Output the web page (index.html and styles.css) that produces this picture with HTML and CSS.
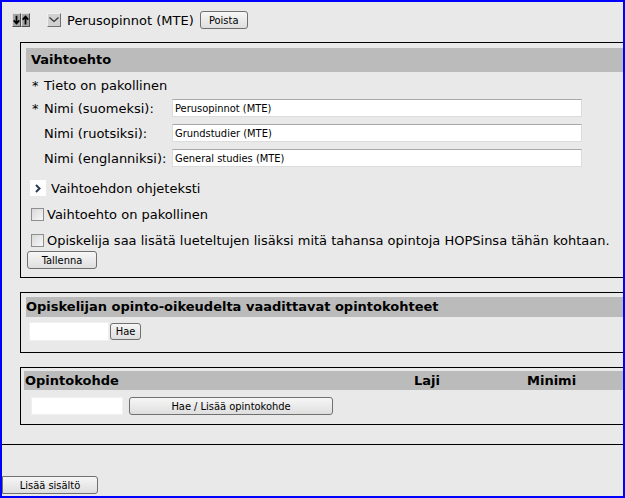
FILE: index.html
```html
<!DOCTYPE html>
<html>
<head>
	<title>Vaihtoehto</title>
	<link rel="stylesheet" href="styles.css">
</head>
<body>
	<div class="frame">
		<div class="item">
			<div class="item-head">
				<span class="move-btns">
					<span class="arrow-btn"><svg width="8" height="10" viewBox="0 0 8 10"><path d="M4 0v9M0.8 5.5l3.2 3.5 3.2-3.5" fill="none" stroke="#000" stroke-width="2"/></svg></span>
					<span class="arrow-btn"><svg width="8" height="10" viewBox="0 0 8 10"><path d="M4 10v-9M0.8 4.5l3.2-3.5 3.2 3.5" fill="none" stroke="#000" stroke-width="2"/></svg></span>
				</span>
				<span class="toggle-btn"><svg width="10" height="6" viewBox="0 0 10 6"><path d="M0.5 0.5l4.5 4 4.5-4" fill="none" stroke="#333" stroke-width="1.2"/></svg></span>
				<span class="item-title">Perusopinnot (MTE)</span>
				<button class="btn btn-small">Poista</button>
			</div>

			<div class="box box-main">
				<h2 class="box-title">Vaihtoehto</h2>
				<div class="form-note"><span class="req">*</span>Tieto on pakollinen</div>
				<div class="form-grid">
					<label><span class="req">*</span>Nimi (suomeksi):</label>
					<input class="text-input" type="text" value="Perusopinnot (MTE)">
					<label><span class="req"></span>Nimi (ruotsiksi):</label>
					<input class="text-input" type="text" value="Grundstudier (MTE)">
					<label><span class="req"></span>Nimi (englanniksi):</label>
					<input class="text-input" type="text" value="General studies (MTE)">
				</div>
				<div class="help-toggle">
					<span class="chevron"><svg width="6" height="9" viewBox="0 0 6 9"><path d="M1 1l3.5 3.5L1 8" fill="none" stroke="#2c3a55" stroke-width="2"/></svg></span>
					<span>Vaihtoehdon ohjeteksti</span>
				</div>
				<label class="check-row"><input type="checkbox" class="check">Vaihtoehto on pakollinen</label>
				<label class="check-row"><input type="checkbox" class="check">Opiskelija saa lisätä lueteltujen lisäksi mitä tahansa opintoja HOPSinsa tähän kohtaan.</label>
				<button class="btn btn-save">Tallenna</button>
			</div>

			<div class="box box-rights">
				<h2 class="box-title box-title-small">Opiskelijan opinto-oikeudelta vaadittavat opintokohteet</h2>
				<div class="search-row">
					<input class="plain-input rights-input" type="text">
					<button class="btn btn-hae">Hae</button>
				</div>
			</div>

			<div class="box box-courses">
				<div class="table-head">
					<span class="col-name">Opintokohde</span>
					<span class="col-type">Laji</span>
					<span class="col-min">Minimi</span>
				</div>
				<div class="search-row course-row">
					<input class="plain-input course-input" type="text">
					<button class="btn btn-add">Hae / Lisää opintokohde</button>
				</div>
			</div>
		</div>

		<button class="btn btn-content">Lisää sisältö</button>
	</div>
</body>
</html>
```

FILE: styles.css
```css
* {
	margin: 0;
	padding: 0;
	box-sizing: border-box;
}

body {
	font-family: "DejaVu Sans", Verdana, sans-serif;
	font-size: 13px;
	color: #000;
	background-color: #e9e9e9;
}

.frame {
	height: 498px;
	border: 2px solid #0000ff;
	background-color: #e9e9e9;
	overflow: hidden;
}

.item {
	border-bottom: 1px solid #000;
	padding-bottom: 19px;
}

/* top row */
.item-head {
	display: flex;
	align-items: center;
	height: 18px;
	margin-top: 9px;
	padding-left: 10px;
}

.move-btns {
	display: flex;
}

.arrow-btn {
	display: flex;
	align-items: center;
	justify-content: center;
	width: 9px;
	height: 14px;
	background-color: #a4a4a4;
	border-top: 1px solid #e0e0e0;
	border-left: 1px solid #e0e0e0;
	border-right: 1px solid #505050;
	border-bottom: 1px solid #505050;
}

.toggle-btn {
	display: flex;
	align-items: center;
	justify-content: center;
	width: 14px;
	height: 14px;
	margin-left: 17px;
	background-color: #d0d0d0;
	border-top: 1px solid #f0f0f0;
	border-left: 1px solid #f0f0f0;
	border-right: 1px solid #707070;
	border-bottom: 1px solid #707070;
}

.item-title {
	margin-left: 6px;
	margin-right: 6px;
}

/* buttons */
.btn {
	font-family: "DejaVu Sans Condensed", Tahoma, sans-serif;
	font-size: 11px;
	color: #000;
	height: 18px;
	background: linear-gradient(#f6f6f6, #dedede);
	border: 1px solid #707070;
	border-radius: 3px;
}

.btn-small {
	width: 48px;
}

.btn-save {
	width: 70px;
	margin: 2px 0 0 6px;
}

.btn-hae {
	width: 31px;
	height: 17px;
	margin-left: 1px;
}

.btn-add {
	width: 204px;
	margin-left: 6px;
}

.btn-content {
	width: 96px;
	margin-top: 31px;
	border-radius: 0 3px 3px 0;
}

/* boxes */
.box {
	border: 1px solid #000;
	border-right: none;
	margin-left: 18px;
}

.box-main {
	margin-top: 13px;
	height: 236px;
}

.box-rights {
	margin-top: 14px;
	height: 61px;
}

.box-courses {
	margin-top: 14px;
	height: 58px;
}

.box-title {
	font-size: 13px;
	font-weight: bold;
	height: 24px;
	line-height: 24px;
	margin: 5px 0 0 5px;
	padding-left: 5px;
	background-color: #bbb;
}

.box-title-small {
	height: 20px;
	line-height: 20px;
	margin-top: 4px;
	padding-left: 0;
}

.req {
	display: inline-block;
	width: 12px;
}

.form-note {
	margin: 5px 0 0 11px;
	height: 18px;
	line-height: 18px;
}

.form-grid {
	display: grid;
	grid-template-columns: 140px 410px;
	row-gap: 7px;
	margin: 4px 0 0 11px;
	align-items: center;
}

.text-input {
	font-family: "DejaVu Sans Condensed", Tahoma, sans-serif;
	font-size: 11px;
	height: 18px;
	padding-left: 2px;
	background-color: #fff;
	border: 1px solid #dcdcdc;
	border-top-color: #a8a8a8;
}

.help-toggle {
	display: flex;
	align-items: center;
	margin: 13px 0 0 9px;
	height: 16px;
}

.chevron {
	display: flex;
	align-items: center;
	justify-content: center;
	width: 16px;
	height: 16px;
	margin-right: 5px;
	background-color: #fff;
}

.check-row {
	display: flex;
	align-items: center;
	height: 18px;
	margin-left: 10px;
}

.help-toggle + .check-row {
	margin-top: 9px;
}

.check-row + .check-row {
	margin-top: 8px;
}

.check {
	appearance: none;
	width: 13px;
	height: 13px;
	margin-right: 3px;
	border: 1px solid #8e8e8e;
	background: linear-gradient(135deg, #d8d8d8, #f8f8f8);
}

/* search rows */
.search-row {
	display: flex;
	align-items: center;
	margin: 5px 0 0 8px;
}

.plain-input {
	height: 19px;
	background-color: #fff;
	border: 1px solid #f0f0f0;
}

.rights-input {
	width: 80px;
}

.table-head {
	display: flex;
	height: 19px;
	line-height: 19px;
	margin: 3px 0 0 3px;
	padding-left: 1px;
	background-color: #bbb;
	font-weight: bold;
}

.col-name {
	width: 389px;
}

.col-type {
	width: 113px;
}

.course-row {
	margin: 7px 0 0 10px;
}

.course-input {
	width: 92px;
	height: 18px;
}
```
